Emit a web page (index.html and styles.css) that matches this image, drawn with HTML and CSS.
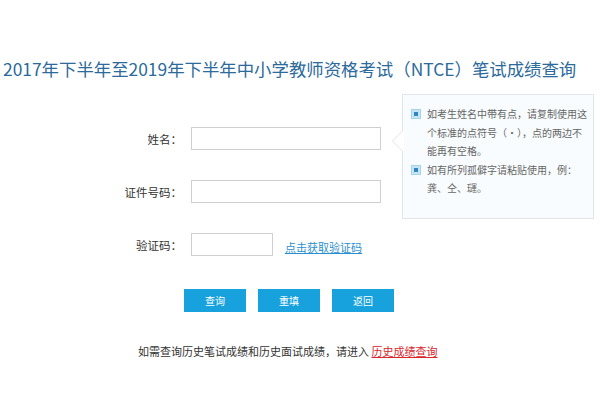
FILE: index.html
```html
<!DOCTYPE html>
<html lang="zh-CN">
<head>
<meta charset="utf-8">
<title>成绩查询</title>
<link rel="stylesheet" href="styles.css">
</head>
<body>
<h1 class="title">2017年下半年至2019年下半年中小学教师资格考试（NTCE）笔试成绩查询</h1>
<div class="main">
  <div class="form">
    <div class="row">
      <label class="label">姓名：</label>
      <input class="input input-wide" type="text">
    </div>
    <div class="row">
      <label class="label">证件号码：</label>
      <input class="input input-wide" type="text">
    </div>
    <div class="row">
      <label class="label">验证码：</label>
      <input class="input input-short" type="text">
      <a class="code-link" href="#">点击获取验证码</a>
    </div>
  </div>
  <div class="tip">
    <div class="tip-item">
      <span class="bullet"><span class="bullet-dot"></span></span>
      <p class="tip-text">如考生姓名中带有点，请复制使用这<br>个标准的点符号（·），点的两边不<br>能再有空格。</p>
    </div>
    <div class="tip-item">
      <span class="bullet"><span class="bullet-dot"></span></span>
      <p class="tip-text">如有所列孤僻字请粘贴使用，例：<br>龚、仝、璭。</p>
    </div>
  </div>
</div>
<div class="buttons">
  <button class="btn" type="button">查询</button>
  <button class="btn" type="button">重填</button>
  <button class="btn" type="button">返回</button>
</div>
<p class="history">如需查询历史笔试成绩和历史面试成绩，请进入 <a class="history-link" href="#">历史成绩查询</a></p>
</body>
</html>
```
FILE: styles.css
```css
* { box-sizing: border-box; }
html, body { margin: 0; padding: 0; background: #fff; }
body {
  font-family: "Noto Sans CJK SC", "Noto Sans", sans-serif;
  color: #333;
  width: 600px;
  height: 400px;
  overflow: hidden;
}
.title {
  margin: 0;
  padding: 57px 0 0 3px;
  font-size: 17.4px;
  line-height: 24px;
  font-weight: normal;
  color: #2b6a9b;
  white-space: nowrap;
}
.main {
  display: flex;
  margin-top: 13px;
}
.form {
  width: 392px;
  padding-top: 33px;
  display: flex;
  flex-direction: column;
  gap: 30px;
}
.row {
  display: flex;
  align-items: center;
  height: 23px;
}
.label {
  width: 182px;
  text-align: right;
  font-size: 11.5px;
  color: #333;
  margin-right: 9px;
}
.input {
  height: 23px;
  border: 1px solid #cfcfcf;
  background: #fff;
  padding: 0 4px;
  outline: none;
}
.input-wide { width: 190px; }
.input-short { width: 82px; }
.code-link {
  margin-left: 12px;
  font-size: 11px;
  color: #2a8fd0;
  text-decoration: underline;
  margin-top: 4px;
}
.tip {
  position: relative;
  margin-left: 10px;
  width: 192px;
  height: 125px;
  border: 1px solid #e2e6ea;
  background: #f8fcfe;
  padding: 10px 6px 0 8px;
}
.tip::before {
  content: "";
  position: absolute;
  left: -11px;
  top: 35px;
  border-style: solid;
  border-width: 11px 11px 11px 0;
  border-color: transparent #dfe3e7 transparent transparent;
}
.tip::after {
  content: "";
  position: absolute;
  left: -10px;
  top: 35px;
  border-style: solid;
  border-width: 11px 11px 11px 0;
  border-color: transparent #fff transparent transparent;
}
.tip-item {
  display: flex;
  align-items: flex-start;
}
.bullet {
  flex: none;
  width: 10px;
  height: 10px;
  margin-top: 4px;
  margin-right: 6px;
  background: #c6e5f4;
  border: 1px solid #a9d3ea;
  display: flex;
  align-items: center;
  justify-content: center;
}
.bullet-dot {
  width: 4px;
  height: 4px;
  background: #2f86c0;
}
.tip-text {
  margin: 0;
  font-size: 10px;
  line-height: 18.5px;
  color: #666;
  white-space: nowrap;
}
.buttons {
  display: flex;
  gap: 12px;
  margin-top: 33px;
  padding-left: 184px;
}
.btn {
  width: 62px;
  height: 23px;
  border: none;
  background: #17a2de;
  color: #fff;
  font-family: inherit;
  font-size: 10px;
  padding: 0;
}
.history {
  margin: 32px 0 0;
  padding-left: 138px;
  font-size: 11px;
  line-height: 14px;
  color: #333;
}
.history-link {
  color: #d9262c;
  text-decoration: underline;
}
```
